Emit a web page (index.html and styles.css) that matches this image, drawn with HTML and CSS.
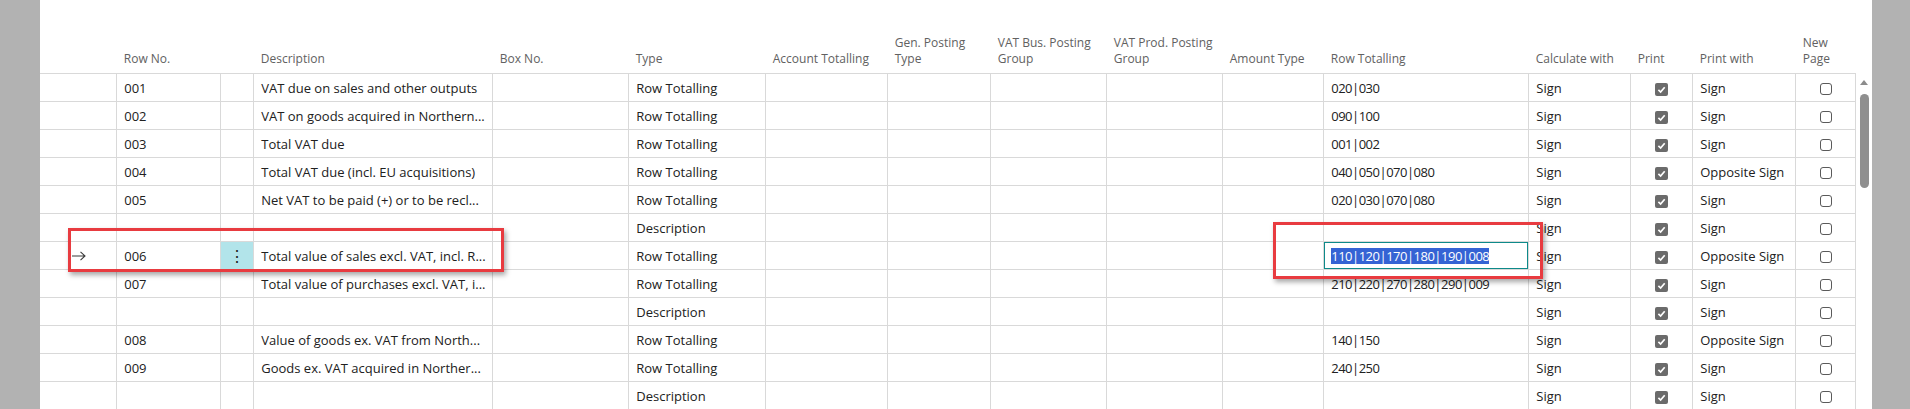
FILE: index.html
```html
<!DOCTYPE html>
<html lang="en">
<head>
  <meta charset="UTF-8">
  <title>VAT Statement Lines</title>
  <link rel="stylesheet" href="styles.css">
</head>
<body>
<div class="page">
  <div class="side"></div>

  <div class="panel">
    <table class="lines">
      <colgroup>
        <col style="width:77px"><col style="width:104px"><col style="width:33px"><col style="width:239px">
        <col style="width:136px"><col style="width:137px"><col style="width:122px"><col style="width:103px">
        <col style="width:116px"><col style="width:116px"><col style="width:101px"><col style="width:205px">
        <col style="width:102px"><col style="width:62px"><col style="width:103px"><col style="width:60px">
      </colgroup>
      <thead>
        <tr>
          <th></th>
          <th>Row No.</th>
          <th></th>
          <th>Description</th>
          <th>Box No.</th>
          <th>Type</th>
          <th>Account Totalling</th>
          <th>Gen. Posting<br>Type</th>
          <th>VAT Bus. Posting<br>Group</th>
          <th>VAT Prod. Posting<br>Group</th>
          <th>Amount Type</th>
          <th>Row Totalling</th>
          <th>Calculate with</th>
          <th>Print</th>
          <th>Print with</th>
          <th>New<br>Page</th>
        </tr>
      </thead>
      <tbody>
        <tr>
          <td></td><td>001</td><td></td><td>VAT due on sales and other outputs</td><td></td><td>Row Totalling</td>
          <td></td><td></td><td></td><td></td><td></td><td class="tot">020|030</td><td>Sign</td>
          <td class="mid"><span class="cb on"><svg viewBox="0 0 13 13"><path d="M3.4 6.9 5.6 9 9.7 4.2"/></svg></span></td>
          <td>Sign</td><td class="mid"><span class="cb"></span></td>
        </tr>
        <tr>
          <td></td><td>002</td><td></td><td>VAT on goods acquired in Northern...</td><td></td><td>Row Totalling</td>
          <td></td><td></td><td></td><td></td><td></td><td class="tot">090|100</td><td>Sign</td>
          <td class="mid"><span class="cb on"><svg viewBox="0 0 13 13"><path d="M3.4 6.9 5.6 9 9.7 4.2"/></svg></span></td>
          <td>Sign</td><td class="mid"><span class="cb"></span></td>
        </tr>
        <tr>
          <td></td><td>003</td><td></td><td>Total VAT due</td><td></td><td>Row Totalling</td>
          <td></td><td></td><td></td><td></td><td></td><td class="tot">001|002</td><td>Sign</td>
          <td class="mid"><span class="cb on"><svg viewBox="0 0 13 13"><path d="M3.4 6.9 5.6 9 9.7 4.2"/></svg></span></td>
          <td>Sign</td><td class="mid"><span class="cb"></span></td>
        </tr>
        <tr>
          <td></td><td>004</td><td></td><td>Total VAT due (incl. EU acquisitions)</td><td></td><td>Row Totalling</td>
          <td></td><td></td><td></td><td></td><td></td><td class="tot">040|050|070|080</td><td>Sign</td>
          <td class="mid"><span class="cb on"><svg viewBox="0 0 13 13"><path d="M3.4 6.9 5.6 9 9.7 4.2"/></svg></span></td>
          <td>Opposite Sign</td><td class="mid"><span class="cb"></span></td>
        </tr>
        <tr>
          <td></td><td>005</td><td></td><td>Net VAT to be paid (+) or to be recl...</td><td></td><td>Row Totalling</td>
          <td></td><td></td><td></td><td></td><td></td><td class="tot">020|030|070|080</td><td>Sign</td>
          <td class="mid"><span class="cb on"><svg viewBox="0 0 13 13"><path d="M3.4 6.9 5.6 9 9.7 4.2"/></svg></span></td>
          <td>Sign</td><td class="mid"><span class="cb"></span></td>
        </tr>
        <tr>
          <td></td><td></td><td></td><td></td><td></td><td>Description</td>
          <td></td><td></td><td></td><td></td><td></td><td></td><td>Sign</td>
          <td class="mid"><span class="cb on"><svg viewBox="0 0 13 13"><path d="M3.4 6.9 5.6 9 9.7 4.2"/></svg></span></td>
          <td>Sign</td><td class="mid"><span class="cb"></span></td>
        </tr>
        <tr class="current">
          <td class="marker"><svg viewBox="0 0 14 10"><path d="M0 5h13M8.5 0.8 13 5 8.5 9.2"/></svg></td>
          <td>006</td>
          <td class="dots">&#8942;</td>
          <td>Total value of sales excl. VAT, incl. R...</td><td></td><td>Row Totalling</td>
          <td></td><td></td><td></td><td></td><td></td>
          <td class="editing"><div class="field"><span class="sel">110|120|170|180|190|008</span></div></td>
          <td>Sign</td>
          <td class="mid"><span class="cb on"><svg viewBox="0 0 13 13"><path d="M3.4 6.9 5.6 9 9.7 4.2"/></svg></span></td>
          <td>Opposite Sign</td><td class="mid"><span class="cb"></span></td>
        </tr>
        <tr>
          <td></td><td>007</td><td></td><td>Total value of purchases excl. VAT, i...</td><td></td><td>Row Totalling</td>
          <td></td><td></td><td></td><td></td><td></td><td class="tot">210|220|270|280|290|009</td><td>Sign</td>
          <td class="mid"><span class="cb on"><svg viewBox="0 0 13 13"><path d="M3.4 6.9 5.6 9 9.7 4.2"/></svg></span></td>
          <td>Sign</td><td class="mid"><span class="cb"></span></td>
        </tr>
        <tr>
          <td></td><td></td><td></td><td></td><td></td><td>Description</td>
          <td></td><td></td><td></td><td></td><td></td><td></td><td>Sign</td>
          <td class="mid"><span class="cb on"><svg viewBox="0 0 13 13"><path d="M3.4 6.9 5.6 9 9.7 4.2"/></svg></span></td>
          <td>Sign</td><td class="mid"><span class="cb"></span></td>
        </tr>
        <tr>
          <td></td><td>008</td><td></td><td>Value of goods ex. VAT from North...</td><td></td><td>Row Totalling</td>
          <td></td><td></td><td></td><td></td><td></td><td class="tot">140|150</td><td>Sign</td>
          <td class="mid"><span class="cb on"><svg viewBox="0 0 13 13"><path d="M3.4 6.9 5.6 9 9.7 4.2"/></svg></span></td>
          <td>Opposite Sign</td><td class="mid"><span class="cb"></span></td>
        </tr>
        <tr>
          <td></td><td>009</td><td></td><td>Goods ex. VAT acquired in Norther...</td><td></td><td>Row Totalling</td>
          <td></td><td></td><td></td><td></td><td></td><td class="tot">240|250</td><td>Sign</td>
          <td class="mid"><span class="cb on"><svg viewBox="0 0 13 13"><path d="M3.4 6.9 5.6 9 9.7 4.2"/></svg></span></td>
          <td>Sign</td><td class="mid"><span class="cb"></span></td>
        </tr>
        <tr>
          <td></td><td></td><td></td><td></td><td></td><td>Description</td>
          <td></td><td></td><td></td><td></td><td></td><td></td><td>Sign</td>
          <td class="mid"><span class="cb on"><svg viewBox="0 0 13 13"><path d="M3.4 6.9 5.6 9 9.7 4.2"/></svg></span></td>
          <td>Sign</td><td class="mid"><span class="cb"></span></td>
        </tr>
      </tbody>
    </table>

    <!-- vertical scrollbar -->
    <div class="scrollbar">
      <div class="arrow-up"></div>
      <div class="thumb"></div>
    </div>
  </div>

  <div class="side right"></div>

  <!-- annotation boxes drawn over the grid -->
  <div class="callout callout-row"></div>
  <div class="callout callout-field"></div>
</div>
</body>
</html>
```

FILE: styles.css
```css
body {
  margin: 0;
  font-family: "Open Sans", "Noto Sans", sans-serif;
  background: #b2b2b2;
}
.page {
  position: relative;
  display: flex;
  height: 409px;
  overflow: hidden;
}
.side {
  width: 40px;
  background: #b2b2b2;
}
.side.right {
  width: 38px;
}
.panel {
  flex: 1;
  display: flex;
  align-items: flex-start;
  background: #fff;
  padding-top: 24px;
}
.lines {
  width: 1816px;
  table-layout: fixed;
  border-collapse: collapse;
}
.lines th {
  height: 43px;
  padding: 0 7px 6px;
  font-size: 12px;
  font-weight: normal;
  line-height: 16px;
  color: #616161;
  text-align: left;
  vertical-align: bottom;
  white-space: nowrap;
  border-bottom: 1px solid #d9d9d9;
}
.lines tbody tr {
  height: 28px;
}
.lines td {
  padding: 0 7px;
  font-size: 13px;
  color: #212121;
  white-space: nowrap;
  overflow: hidden;
  border: 1px solid #d9d9d9;
}
.lines td:first-child {
  border-left: none;
}
.lines td.mid {
  text-align: center;
  padding: 0;
}
/* pipes in Open Sans are wide, pull the filter strings in a bit */
.lines td.tot,
.sel {
  letter-spacing: -0.5px;
}
.cb {
  display: inline-block;
  width: 12px;
  height: 12px;
  border: 1px solid #5a5a5a;
  border-radius: 3px;
  vertical-align: middle;
  box-sizing: border-box;
  background: #fff;
}
.cb.on {
  border: none;
  width: 13px;
  height: 13px;
  border-radius: 2px;
  background: #6b6b6b;
}
.cb svg {
  display: block;
  width: 13px;
  height: 13px;
}
.cb svg path {
  fill: none;
  stroke: #fff;
  stroke-width: 1.7;
}
.marker {
  padding-left: 32px !important;
}
.marker svg {
  display: block;
  width: 14px;
  height: 10px;
}
.marker svg path {
  fill: none;
  stroke: #3b3b3b;
  stroke-width: 1.1;
}
.dots {
  background: #b2e4ea;
  text-align: center;
  font-size: 16px !important;
  padding: 0 !important;
  color: #222;
}
.editing {
  padding: 0 !important;
}
.field {
  height: 27px;
  border: 1px solid #0e8a8a;
  box-sizing: border-box;
  padding: 0 6px;
  display: flex;
  align-items: center;
}
.sel {
  background: #3563d4;
  color: #fff;
  line-height: 16px;
}
.scrollbar {
  width: 16px;
  padding-top: 56px;
  display: flex;
  flex-direction: column;
  align-items: center;
}
.arrow-up {
  width: 0;
  height: 0;
  border-left: 4px solid transparent;
  border-right: 4px solid transparent;
  border-bottom: 5px solid #8c8c8c;
  margin-bottom: 9px;
}
.thumb {
  width: 9px;
  height: 94px;
  border-radius: 5px;
  background: #8f8f8f;
}
.callout {
  position: absolute;
  border: 3px solid #e83b40;
  box-shadow: 2px 3px 5px rgba(0, 0, 0, 0.35);
}
.callout-row {
  left: 68px;
  top: 228px;
  width: 430px;
  height: 38px;
}
.callout-field {
  left: 1273px;
  top: 222px;
  width: 264px;
  height: 51px;
}
```
